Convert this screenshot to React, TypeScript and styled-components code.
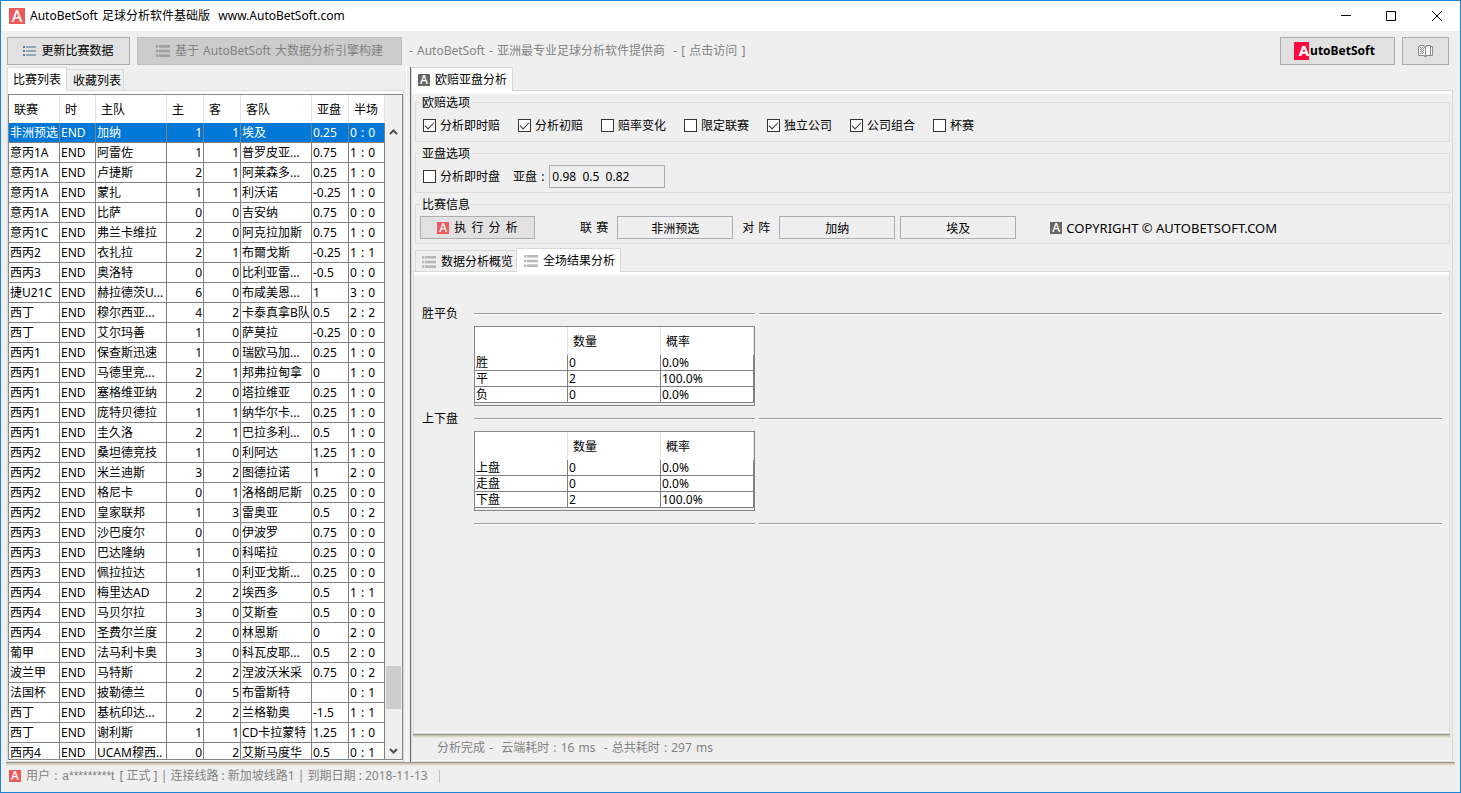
import React from 'react';
import styled, { createGlobalStyle } from 'styled-components';

const line = '#d9d9d9';
const face = '#efefef';
const muted = '#838383';

const GlobalStyle = createGlobalStyle`
  *, *::before, *::after { box-sizing: border-box; }
  body { margin: 0; background: ${face}; }
  body, button, input, table {
    font-family: "Noto Sans", "Noto Sans CJK SC", sans-serif;
    font-size: 12px;
    line-height: 16px;
    color: #000;
  }
`;

const Window = styled.div`
  display: flex;
  flex-direction: column;
  height: 100vh;
  border: 1px solid #1883d7;
  background: ${face};
  white-space: pre;
  overflow: hidden;
`;

const TitleBar = styled.header`
  display: flex;
  align-items: center;
  flex: none;
  height: 30px;
  padding-left: 8px;
  background: #fff;
`;

const Title = styled.h1`
  flex: 1;
  margin: 0 0 0 5px;
  font-size: 12px;
  font-weight: 400;
`;

const WindowButton = styled.button`
  display: grid;
  place-items: center;
  width: 46px;
  height: 30px;
  padding: 0;
  border: 0;
  background: transparent;
`;

const Logo = styled.span<{ $size: number; $color: string }>`
  display: inline-flex;
  align-items: center;
  justify-content: center;
  flex: none;
  width: ${p => p.$size}px;
  height: ${p => p.$size}px;
  background: ${p => p.$color};
  color: #fff;
  font-size: ${p => p.$size}px;
  line-height: ${p => p.$size}px;
  font-weight: 500;
`;

const Words = styled.span<{ $gap: number }>`
  display: inline-flex;
  gap: ${p => p.$gap}px;
`;

const Toolbar = styled.div`
  display: flex;
  align-items: flex-start;
  flex: none;
  gap: 7px;
  height: 36px;
  padding: 6px 11px 0 6px;
`;

const PushButton = styled.button<{ $width: number; $height?: number }>`
  display: flex;
  align-items: center;
  justify-content: center;
  flex: none;
  gap: 5px;
  width: ${p => p.$width}px;
  height: ${p => p.$height ?? 28}px;
  padding: 0;
  border: 1px solid #adadad;
  background: #e1e1e1;
  white-space: pre;
  &:disabled {
    border-color: #bfbfbf;
    background: #ccc;
    color: ${muted};
  }
`;

const SiteLink = styled.a`
  flex: 1;
  line-height: 28px;
  color: ${muted};
  text-decoration: none;
`;

const Brand = styled.span`
  display: flex;
  align-items: center;
  gap: 1px;
  margin-right: 6px;
  font-weight: 700;
`;

const BrandMark = styled.span`
  width: 15px;
  height: 18px;
  margin-bottom: 1px;
  background: #ff0a3c;
  color: #fff;
  font-size: 15px;
  line-height: 17px;
  text-align: right;
`;

const Body = styled.main`
  display: grid;
  grid-template-columns: 397px 7px minmax(0, 1fr);
  flex: 1;
  min-height: 0;
  padding: 0 7px 0 6px;
`;

const Splitter = styled.div`
  border-right: 1px solid #6e6e6e;
  background: linear-gradient(to right, ${face} 2px, #fff 2px, #fff 3px, ${face} 3px);
`;

const Column = styled.section`
  display: flex;
  flex-direction: column;
  min-width: 0;
  min-height: 0;
`;

const TabStrip = styled.div<{ $nested?: boolean }>`
  display: flex;
  align-items: flex-end;
  flex: none;
  height: ${p => (p.$nested ? 25 : 24)}px;
  margin-bottom: -1px;
  padding-left: ${p => (p.$nested ? 2 : 0)}px;
  z-index: 1;
`;

const ActiveTab = styled.button<{ $before?: number }>`
  display: flex;
  align-items: center;
  gap: 5px;
  height: 24px;
  padding: 0 5px 0 ${p => p.$before ?? 5}px;
  border: 1px solid ${line};
  border-bottom: 0;
  background: #fff;
`;

const IdleTab = styled(ActiveTab)<{ $first?: boolean }>`
  height: 21px;
  margin-bottom: 1px;
  padding: 1px ${p => (p.$first ? 3 : 2)}px 0 6px;
  border-left-width: ${p => (p.$first ? 1 : 0)}px;
  border-right-width: ${p => (p.$first ? 0 : 1)}px;
  background: ${face};
`;

const Pane = styled.div<{ $sides?: string }>`
  display: flex;
  flex-direction: column;
  flex: 1;
  min-height: 0;
  padding: ${p => p.$sides ?? '0'};
  border: 1px solid ${line};
  border-top: 0;
  box-shadow: inset 0 1px ${line}, inset 0 4px #fff, inset 0 -1px #fff;
`;

const TableFrame = styled.div`
  display: flex;
  flex: 1;
  min-height: 0;
  border: 1px solid #828790;
  background: ${face};
  overflow: hidden;
`;

const MatchTable = styled.table`
  flex: none;
  align-self: flex-start;
  width: 376px;
  table-layout: fixed;
  border-collapse: separate;
  border-spacing: 0;
`;

const HeadCell = styled.th`
  height: 28px;
  padding: 2px 0 0 5px;
  border-right: 1px solid #e5e5e5;
  background: #fff;
  font-weight: 400;
  text-align: left;
`;

const MatchRow = styled.tr<{ $selected: boolean }>`
  background: ${p => (p.$selected ? '#0078d7' : '#fff')};
  color: ${p => (p.$selected ? '#fff' : '#000')};
`;

const Cell = styled.td<{ $height: number; $right?: boolean }>`
  height: ${p => p.$height}px;
  padding: 0 1px;
  border-right: 1px solid #808080;
  border-bottom: 1px solid #808080;
  line-height: ${p => p.$height - 1}px;
  text-align: ${p => (p.$right ? 'right' : 'left')};
`;

const ScrollTrack = styled.div`
  display: flex;
  flex-direction: column;
  flex: 1;
  margin-top: 28px;
  padding: 0 1px;
`;

const ScrollSpace = styled.div<{ $grow: number }>`
  flex: ${p => p.$grow};
`;

const ScrollThumb = styled.div`
  height: 43px;
  background: #cdcdcd;
`;

const ScrollButton = styled.button`
  display: grid;
  place-items: center;
  height: 17px;
  padding: 0;
  border: 0;
  background: transparent;
`;

const Group = styled.fieldset`
  flex: none;
  min-width: 0;
  margin: 0 0 3px 2px;
  padding: 0 4px;
  border: 1px solid #dcdcdc;
`;

const Legend = styled.legend`
  height: 16px;
  padding: 0 2px;
  line-height: 18px;
`;

const GroupRow = styled.div<{ $gap: number; $inset?: number }>`
  display: flex;
  align-items: center;
  gap: ${p => p.$gap}px;
  height: 31px;
  padding-left: ${p => p.$inset ?? 0}px;
`;

const CheckLabel = styled.label`
  display: flex;
  align-items: center;
  gap: 4px;
`;

const CheckBox = styled.input`
  appearance: none;
  display: grid;
  place-items: center;
  width: 13px;
  height: 13px;
  margin: 0;
  border: 1px solid #333;
  background: #fff;
  &:checked::before {
    content: "";
    width: 9px;
    height: 5px;
    margin-bottom: 3px;
    border: solid #333;
    border-width: 0 0 1px 1px;
    transform: rotate(-45deg);
  }
`;

const FieldLabel = styled.label`
  display: flex;
  align-items: center;
  gap: 5px;
`;

const Field = styled.input<{ $center?: boolean }>`
  width: 116px;
  height: 23px;
  padding: 0 2px;
  border: 1px solid #abadb3;
  background: ${face};
  text-align: ${p => (p.$center ? 'center' : 'left')};
`;

const MatchFields = styled.div`
  display: flex;
  align-items: center;
  gap: 9px;
  margin: 0 34px 0 45px;
`;

const Versus = styled.div`
  display: flex;
  gap: 5px;
`;

const Copyright = styled.span`
  display: flex;
  align-items: center;
  gap: 4px;
  font-size: 13px;
`;

const Results = styled.div`
  display: grid;
  grid-template-columns: 48px 281px minmax(0, 1fr);
  grid-auto-rows: min-content;
  flex: 1;
  column-gap: 4px;
  padding: 30px 7px 0 8px;
`;

const ResultName = styled.h2`
  grid-column: 1;
  margin: 0;
  font-size: 12px;
  font-weight: 400;
  line-height: 25px;
`;

const Rule = styled.hr<{ $column: number }>`
  grid-column: ${p => p.$column};
  width: 100%;
  height: 2px;
  margin: 12px 0 11px;
  border: 0;
  background: linear-gradient(#9d9d9d 1px, #fff 1px);
`;

const ResultFrame = styled.div`
  grid-column: 2;
  height: 80px;
  border: 1px solid #828790;
`;

const ResultTable = styled.table`
  width: 100%;
  table-layout: fixed;
  border-collapse: separate;
  border-spacing: 0;
  background: #fff;
`;

const Groove = styled.div`
  flex: none;
  height: 4px;
  background: linear-gradient(#99998c 1px, #c5c2b2 1px, #c5c2b2 2px, #dbd8c9 2px, #dbd8c9 3px, #e9e5d8 3px);
`;

const AnalysisStatus = styled.p`
  flex: none;
  height: 22px;
  margin: 0;
  padding: 2px 0 0 24px;
  color: ${muted};
`;

const StatusBar = styled.footer`
  display: flex;
  align-items: center;
  flex: none;
  gap: 5px;
  height: 26px;
  padding: 0 8px 6px;
  color: ${muted};
`;

const Account = styled.span`
  font-family: "Liberation Sans", sans-serif;
`;

const FooterGroove = styled(Groove)`
  margin: 0 5px;
`;

const StatusEnd = styled.span`
  width: 1px;
  height: 13px;
  margin-left: 6px;
  background: #cdbfc9;
`;

/* Sets a phrase word by word, with a little extra room after each space. */
function Spaced({ text, gap = 1 }: { text: string; gap?: number }) {
  return (
    <Words $gap={gap}>
      {text.split(/(?<= )/).map((word, i) => <span key={i}>{word}</span>)}
    </Words>
  );
}

function ListIcon({ color = '#bababa' }: { color?: string }) {
  return (
    <svg width="14" height="12" viewBox="0 0 42 36" fill={color} aria-hidden="true">
      {[0, 14, 28].map(y => (
        <g key={y}>
          <rect x="0" y={y} width="7" height="8" />
          <rect x="9" y={y} width="33" height="8" />
        </g>
      ))}
    </svg>
  );
}

function UpdateIcon() {
  return (
    <svg width="13" height="11" viewBox="0 0 13 11" shapeRendering="crispEdges" aria-hidden="true">
      {[0, 4, 8].map(y => (
        <g key={y}>
          <rect x="0" y={y} width="2" height="2" fill="#5c7f93" />
          <rect x="3" y={y} width="10" height="2" fill="#8fa9b7" />
        </g>
      ))}
    </svg>
  );
}

function BookIcon() {
  return (
    <svg width="15" height="13" viewBox="0 0 15 13" fill="none" stroke="#8c8c8c" aria-hidden="true">
      <path d="M.5 1.5h1v-1h4v1h1v1h1v-1h1v-1h4v1h2v9h-6v1h-2v-1h-6z" fill="#f3f3f3" />
      <path d="M7.5 2v9M12.5 1v9" />
      <path d="M2 2.5h4M3 3.5h3M2 4.5h4M3 5.5h3M2 6.5h4M3 7.5h3M2 8.5h4" strokeDasharray="1 1" />
    </svg>
  );
}

function Chevron({ up }: { up?: boolean }) {
  return (
    <svg width="9" height="6" viewBox="0 0 9 6" fill="none" stroke="#505050" strokeWidth="2" aria-hidden="true">
      <path d={up ? 'M1 5l3.500-3.500L8 5' : 'M1 1l3.500 3.500L8 1'} />
    </svg>
  );
}

const columns: [string, number][] = [
  ['联赛', 51], ['时', 36], ['主队', 71], ['主', 37], ['客', 37], ['客队', 71], ['亚盘', 37], ['半场', 36],
];

const matches = `非洲预选|加纳|1|1|埃及|0.25|0 : 0
意丙1A|阿雷佐|1|1|普罗皮亚...|0.75|1 : 0
意丙1A|卢捷斯|2|1|阿莱森多...|0.25|1 : 0
意丙1A|蒙扎|1|1|利沃诺|-0.25|1 : 0
意丙1A|比萨|0|0|吉安纳|0.75|0 : 0
意丙1C|弗兰卡维拉|2|0|阿克拉加斯|0.75|1 : 0
西丙2|衣扎拉|2|1|布爾戈斯|-0.25|1 : 1
西丙3|奥洛特|0|0|比利亚雷...|-0.5|0 : 0
捷U21C|赫拉德茨U...|6|0|布咸美恩...|1|3 : 0
西丁|穆尔西亚...|4|2|卡泰真拿B队|0.5|2 : 2
西丁|艾尔玛善|1|0|萨莫拉|-0.25|0 : 0
西丙1|保查斯迅速|1|0|瑞欧马加...|0.25|1 : 0
西丙1|马德里竞...|2|1|邦弗拉甸拿|0|1 : 0
西丙1|塞格维亚纳|2|0|塔拉维亚|0.25|1 : 0
西丙1|庞特贝德拉|1|1|纳华尔卡...|0.25|1 : 0
西丙1|圭久洛|2|1|巴拉多利...|0.5|1 : 0
西丙2|桑坦德竞技|1|0|利阿达|1.25|1 : 0
西丙2|米兰迪斯|3|2|图德拉诺|1|2 : 0
西丙2|格尼卡|0|1|洛格朗尼斯|0.25|0 : 0
西丙2|皇家联邦|1|3|雷奥亚|0.5|0 : 2
西丙3|沙巴度尔|0|0|伊波罗|0.75|0 : 0
西丙3|巴达隆纳|1|0|科喏拉|0.25|0 : 0
西丙3|佩拉拉达|1|0|利亚戈斯...|0.25|0 : 0
西丙4|梅里达AD|2|2|埃西多|0.5|1 : 1
西丙4|马贝尔拉|3|0|艾斯查|0.5|0 : 0
西丙4|圣费尔兰度|2|0|林恩斯|0|2 : 0
葡甲|法马利卡奥|3|0|科瓦皮耶...|0.5|2 : 0
波兰甲|马特斯|2|2|涅波沃米采|0.75|0 : 2
法国杯|披勒德兰|0|5|布雷斯特||0 : 1
西丁|基杭印达...|2|2|兰格勒奥|-1.5|1 : 1
西丁|谢利斯|1|1|CD卡拉蒙特|1.25|1 : 0
西丙4|UCAM穆西..|0|2|艾斯马度华|0.5|0 : 1`.split('\n').map(row => {
  const [league, ...rest] = row.split('|');
  return [league, 'END', ...rest];
});

const oddsOptions: [string, boolean][] = [
  ['分析即时赔', true], ['分析初赔', true], ['赔率变化', false], ['限定联赛', false],
  ['独立公司', true], ['公司组合', true], ['杯赛', false],
];

const results = [
  { name: '胜平负', rows: [['胜', '0', '0.0%'], ['平', '2', '100.0%'], ['负', '0', '0.0%']] },
  { name: '上下盘', rows: [['上盘', '0', '0.0%'], ['走盘', '0', '0.0%'], ['下盘', '2', '100.0%']] },
];

function MatchList() {
  return (
    <Column>
      <TabStrip>
        <ActiveTab>比赛列表</ActiveTab>
        <IdleTab>收藏列表</IdleTab>
      </TabStrip>
      <Pane $sides="4px 0 1px">
        <TableFrame>
          <MatchTable>
            <colgroup>
              {columns.map(([name, width]) => <col key={name} width={width} />)}
            </colgroup>
            <thead>
              <tr>{columns.map(([name]) => <HeadCell key={name}>{name}</HeadCell>)}</tr>
            </thead>
            <tbody>
              {matches.map((row, i) => (
                <MatchRow key={i} $selected={i === 0}>
                  {row.map((value, c) => (
                    <Cell key={c} $height={20} $right={c === 3 || c === 4}>
                      {c === 7 ? <Spaced text={value} /> : value}
                    </Cell>
                  ))}
                </MatchRow>
              ))}
            </tbody>
          </MatchTable>
          <ScrollTrack>
            <ScrollButton aria-label="向上滚动"><Chevron up /></ScrollButton>
            <ScrollSpace $grow={16} />
            <ScrollThumb />
            <ScrollSpace $grow={1} />
            <ScrollButton aria-label="向下滚动"><Chevron /></ScrollButton>
          </ScrollTrack>
        </TableFrame>
      </Pane>
    </Column>
  );
}

function ResultBlock({ name, rows }: { name: string; rows: string[][] }) {
  return (
    <>
      <ResultName>{name}</ResultName>
      <Rule $column={2} />
      <Rule $column={3} />
      <ResultFrame>
        <ResultTable aria-label={name}>
          <thead>
            <tr><HeadCell /><HeadCell>数量</HeadCell><HeadCell>概率</HeadCell></tr>
          </thead>
          <tbody>
            {rows.map(row => (
              <tr key={row[0]}>
                {row.map((value, c) => <Cell key={c} $height={16}>{value}</Cell>)}
              </tr>
            ))}
          </tbody>
        </ResultTable>
      </ResultFrame>
    </>
  );
}

function Analysis() {
  return (
    <Column>
      <TabStrip>
        <ActiveTab $before={6}><Logo $size={12} $color="#666">A</Logo>欧赔亚盘分析</ActiveTab>
      </TabStrip>
      <Pane $sides="4px 2px 1px 1px">
        <Group>
          <Legend>欧赔选项</Legend>
          <GroupRow $gap={18} $inset={3}>
            {oddsOptions.map(([label, checked]) => (
              <CheckLabel key={label}>
                <CheckBox type="checkbox" defaultChecked={checked} />
                {label}
              </CheckLabel>
            ))}
          </GroupRow>
        </Group>
        <Group>
          <Legend>亚盘选项</Legend>
          <GroupRow $gap={13} $inset={3}>
            <CheckLabel><CheckBox type="checkbox" />分析即时盘</CheckLabel>
            <FieldLabel><Spaced text="亚盘 :" /><Field readOnly value="0.98  0.5  0.82" /></FieldLabel>
          </GroupRow>
        </Group>
        <Group>
          <Legend>比赛信息</Legend>
          <GroupRow $gap={0}>
            <PushButton $width={115} $height={23}>
              <Logo $size={12} $color="#ee5a5a">A</Logo>
              <Spaced text="执 行 分 析" gap={2} />
            </PushButton>
            <MatchFields>
              <label htmlFor="league"><Spaced text="联 赛" /></label>
              <Field id="league" $center readOnly value="非洲预选" />
              <label htmlFor="home"><Spaced text="对 阵" /></label>
              <Versus>
                <Field id="home" $center readOnly value="加纳" />
                <Field aria-label="客队" $center readOnly value="埃及" />
              </Versus>
            </MatchFields>
            <Copyright><Logo $size={12} $color="#666">A</Logo>COPYRIGHT © AUTOBETSOFT.COM</Copyright>
          </GroupRow>
        </Group>
        <TabStrip $nested>
          <IdleTab $first><ListIcon />数据分析概览</IdleTab>
          <ActiveTab $before={7}><ListIcon />全场结果分析</ActiveTab>
        </TabStrip>
        <Pane>
          <Results>
            {results.map(result => <ResultBlock key={result.name} {...result} />)}
            <Rule $column={2} />
            <Rule $column={3} />
          </Results>
        </Pane>
        <Groove />
        <AnalysisStatus>
          <Spaced text="分析完成 -  云端耗时 : 16 ms  - 总共耗时 : 297 ms" />
        </AnalysisStatus>
      </Pane>
    </Column>
  );
}

export default function App() {
  return (
    <>
      <GlobalStyle />
      <Window>
        <TitleBar>
          <Logo $size={16} $color="#ee5a5a">A</Logo>
          <Title><Spaced text="AutoBetSoft 足球分析软件基础版  www.AutoBetSoft.com" /></Title>
          <WindowButton aria-label="最小化">
            <svg width="11" height="11" stroke="#000" fill="none"><path d="M1 4.500h10" /></svg>
          </WindowButton>
          <WindowButton aria-label="最大化">
            <svg width="11" height="11" stroke="#000" fill="none"><path d="M.5.500h9v9h-9z" /></svg>
          </WindowButton>
          <WindowButton aria-label="关闭">
            <svg width="11" height="11" stroke="#000" fill="none"><path d="M0 0l10 10M10 0L0 10" /></svg>
          </WindowButton>
        </TitleBar>
        <Toolbar>
          <PushButton $width={123}><UpdateIcon />更新比赛数据</PushButton>
          <PushButton $width={265} disabled>
            <ListIcon color="#a0a0a0" />
            <Spaced text="基于 AutoBetSoft 大数据分析引擎构建" />
          </PushButton>
          <SiteLink href="#">
            <Spaced text="- AutoBetSoft - 亚洲最专业足球分析软件提供商  - [ 点击访问 ]" />
          </SiteLink>
          <PushButton $width={115}><Brand><BrandMark>A</BrandMark>utoBetSoft</Brand></PushButton>
          <PushButton $width={47} aria-label="帮助"><BookIcon /></PushButton>
        </Toolbar>
        <Body>
          <MatchList />
          <Splitter />
          <Analysis />
        </Body>
        <FooterGroove />
        <StatusBar>
          <Logo $size={12} $color="#ee5a5a">A</Logo>
          <Spaced text="用户 :" />
          <Account>a*********t</Account>
          <span>[ 正式 ] | 连接线路 : 新加坡线路1 | 到期日期 : 2018-11-13</span>
          <StatusEnd />
        </StatusBar>
      </Window>
    </>
  );
}
